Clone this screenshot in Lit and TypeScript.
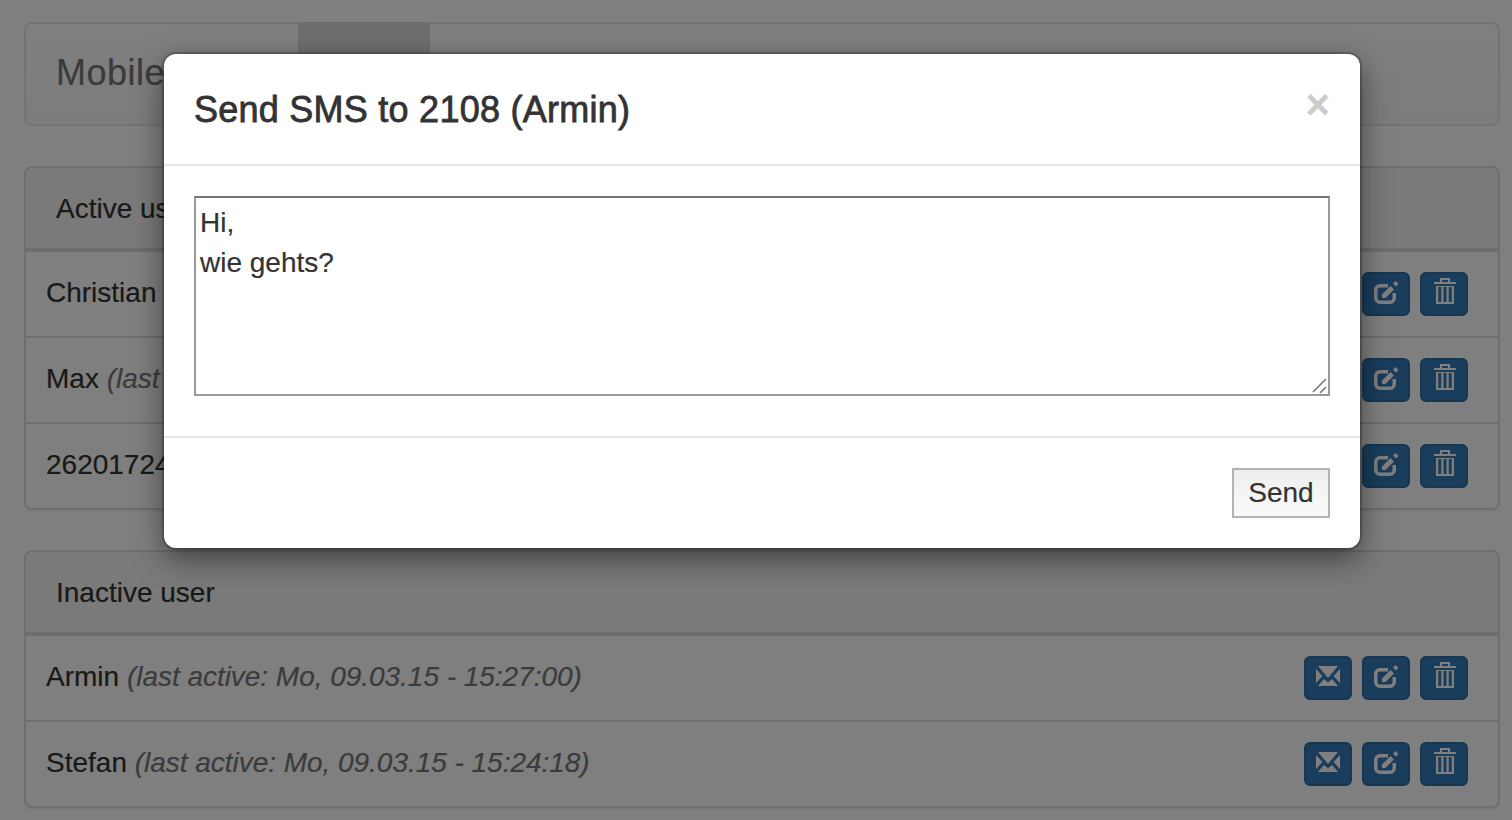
import { LitElement, html, css, svg } from 'lit';
import { customElement } from 'lit/decorators.js';

const mailIcon = svg`
  <path d="M14 10h20L24 22z" />
  <path d="M12 13v14l6.500-7z" />
  <path d="M36 13v14l-6.500-7z" />
  <path d="M14 30l6-7 4 3.500 4-3.500 6 7z" />
`;

const editIcon = svg`
  <path class="line" d="M26 13.750h-8a4.250 4.250 0 0 0-4.250 4.250v8a4.250 4.250 0 0 0 4.250 4.250h10a4.250 4.250 0 0 0 4.250-4.250v-5" />
  <path d="M20 26v-3.500l8.500-8.500 3.500 3.500-8.500 8.500z" />
  <path d="M31 11.500l2.500-2.500 3 3-2.500 2.500z" />
`;

const trashIcon = svg`
  <path d="M14 10h22v2H14z" />
  <path class="line thin" d="M21 10.500V7h8v3.500" />
  <path d="M16 14h18v18H16z" />
  <path class="gap" d="M18.250 15h3v15h-3zM23.500 15h3v15h-3zM28.750 15h3v15h-3z" />
`;

interface User {
  name: string;
  note: string;
}

const activeUsers: User[] = [
  { name: 'Christian', note: '' },
  { name: 'Max', note: '(last active)' },
  { name: '26201724', note: '' },
];

const inactiveUsers: User[] = [
  { name: 'Armin', note: '(last active: Mo, 09.03.15 - 15:27:00)' },
  { name: 'Stefan', note: '(last active: Mo, 09.03.15 - 15:24:18)' },
];

@customElement('app-root')
export class AppRoot extends LitElement {
  static styles = css`
    :host {
      display: block;
      position: relative;
      height: 820px;
      overflow: hidden;
      background: #fff;
      color: #333;
      font-family: 'Liberation Sans', Arial, sans-serif;
      font-size: 28px;
      line-height: 40px;
      -webkit-text-stroke: 0.2px;
    }

    .page {
      display: flex;
      flex-direction: column;
      gap: 40px;
      padding: 22px 12px 0 24px;
    }

    .navbar {
      display: flex;
      height: 100px;
      border: 2px solid #e7e7e7;
      border-radius: 8px;
      background: linear-gradient(#fff, #f8f8f8);
    }

    .brand {
      width: 242px;
      padding: 29px 0 0 30px;
      font-size: 36px;
      letter-spacing: 0.5px;
      color: #777;
      box-sizing: border-box;
    }

    .tab {
      width: 132px;
      height: 102px;
      margin: -2px 0 0 30px;
      background: linear-gradient(#dbdbdb, #e2e2e2);
    }

    .panel {
      border: 2px solid #ddd;
      border-radius: 8px;
      background: #fff;
      box-shadow: 0 2px 2px rgba(0, 0, 0, 0.05);
      overflow: hidden;
    }

    .panel-heading {
      padding: 21px 30px 19px;
      background: #f5f5f5;
      border-bottom: 4px solid #ddd;
    }

    .row {
      display: flex;
      justify-content: space-between;
      align-items: flex-start;
      padding: 20px 30px 20px 20px;
    }

    .row + .row {
      border-top: 2px solid #ddd;
    }

    .user {
      padding-top: 1px;
    }

    .note {
      font-style: italic;
      letter-spacing: -0.03px;
      color: #777;
    }

    .actions {
      display: flex;
      gap: 10px;
    }

    .icon-btn {
      width: 48px;
      height: 44px;
      padding: 0;
      border: 2px solid #2e6da4;
      border-radius: 6px;
      background: #337ab7;
      box-sizing: border-box;
    }

    .icon-btn svg {
      display: block;
      width: 48px;
      height: 44px;
      margin: -2px;
      fill: #fff;
    }

    .icon-btn .line {
      fill: none;
      stroke: #fff;
      stroke-width: 3.5px;
    }

    .icon-btn .thin {
      stroke-width: 2px;
    }

    .icon-btn .gap {
      fill: #337ab7;
    }

    .backdrop {
      position: absolute;
      inset: 0;
      background: rgba(0, 0, 0, 0.5);
    }

    .modal {
      position: absolute;
      left: 164px;
      top: 54px;
      width: 1196px;
      height: 494px;
      display: flex;
      flex-direction: column;
      box-sizing: border-box;
      border-radius: 12px;
      background: #fff;
      box-shadow: 0 0 0 2px rgba(0, 0, 0, 0.2), 0 10px 30px rgba(0, 0, 0, 0.5);
    }

    .modal-header {
      position: relative;
      height: 74px;
      padding: 36px 30px 0;
      border-bottom: 2px solid #e5e5e5;
    }

    .modal-title {
      margin: 0;
      font-size: 36px;
      line-height: 40px;
      font-weight: 400;
      letter-spacing: 0.25px;
      -webkit-text-stroke: 0.8px #333;
    }

    .close {
      position: absolute;
      top: 30px;
      right: 30px;
      padding: 0;
      border: 0;
      background: none;
      font-family: inherit;
      font-size: 42px;
      line-height: 42px;
      font-weight: 700;
      color: #000;
      opacity: 0.2;
    }

    .modal-body {
      padding: 30px 30px 40px;
      border-bottom: 2px solid #e5e5e5;
    }

    .field {
      position: relative;
    }

    textarea {
      display: block;
      width: 100%;
      height: 200px;
      padding: 5px 4px 3px;
      box-sizing: border-box;
      border: 2px solid #999;
      border-top-color: #767676;
      border-radius: 0;
      outline: none;
      resize: none;
      font: inherit;
      color: inherit;
    }

    .grip {
      position: absolute;
      right: 2px;
      bottom: 2px;
      width: 16px;
      height: 16px;
      stroke: #777;
      stroke-width: 1.6px;
      fill: none;
    }

    .modal-footer {
      display: flex;
      justify-content: flex-end;
      padding: 30px;
    }

    .send {
      width: 98px;
      height: 50px;
      padding: 0;
      border: 2px solid #b3b3b3;
      background: linear-gradient(#eee, #fafafa);
      font: inherit;
      color: inherit;
    }
  `;

  private renderUser(user: User) {
    return html`
      <div class="row">
        <div class="user">${user.name} <span class="note">${user.note}</span></div>
        <div class="actions">
          <button class="icon-btn"><svg viewBox="0 0 48 44">${mailIcon}</svg></button>
          <button class="icon-btn"><svg viewBox="0 0 48 44">${editIcon}</svg></button>
          <button class="icon-btn"><svg viewBox="0 0 48 44">${trashIcon}</svg></button>
        </div>
      </div>
    `;
  }

  render() {
    return html`
      <div class="page">
        <div class="navbar">
          <div class="brand">Mobile</div>
          <div class="tab"></div>
        </div>
        <section class="panel">
          <div class="panel-heading">Active user</div>
          ${activeUsers.map((u) => this.renderUser(u))}
        </section>
        <section class="panel">
          <div class="panel-heading">Inactive user</div>
          ${inactiveUsers.map((u) => this.renderUser(u))}
        </section>
      </div>
      <div class="backdrop"></div>
      <div class="modal">
        <div class="modal-header">
          <h4 class="modal-title">Send SMS to 2108 (Armin)</h4>
          <button class="close">×</button>
        </div>
        <div class="modal-body">
          <div class="field">
            <textarea .value=${'Hi,\nwie gehts?'}></textarea>
            <svg class="grip" viewBox="0 0 16 16">
              <path d="M1 14L14 1M8 15l6-6" />
            </svg>
          </div>
        </div>
        <div class="modal-footer">
          <button class="send">Send</button>
        </div>
      </div>
    `;
  }
}
